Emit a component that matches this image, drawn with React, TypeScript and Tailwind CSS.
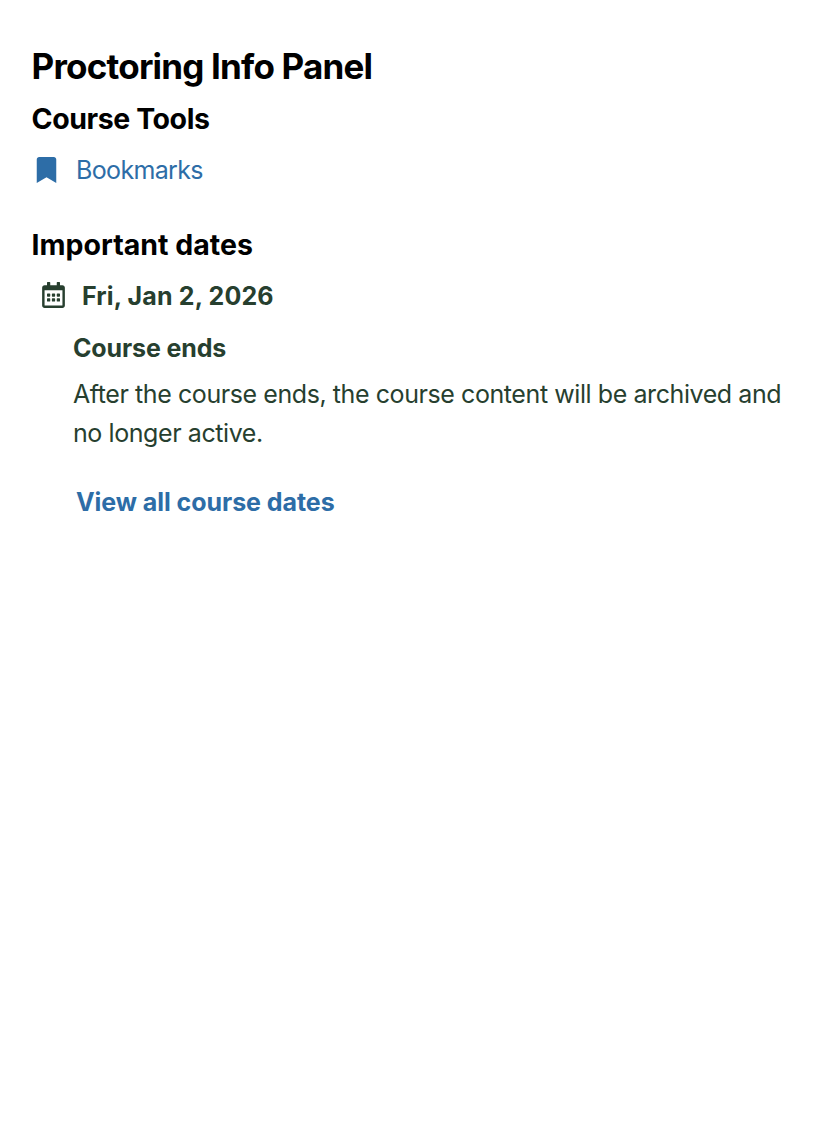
import React from "react";
import { FaBookmark, FaRegCalendarAlt } from "react-icons/fa";

export default function App() {
  return (
    <main className="min-h-screen bg-white px-8 pt-[45px] font-['Inter','Liberation_Sans',sans-serif] text-[#273f2f]">
      <h1 className="-ml-[0.4px] h-[42px] w-max text-[35px] leading-[42px] font-bold tracking-[-0.8px] text-black">Proctoring Info Panel</h1>
      <section>
        <h2 className="mt-[14px] -ml-[0.4px] h-9 w-max text-[28.5px] leading-9 font-bold tracking-[-0.43px] text-black">Course Tools</h2>
        <a className="mt-[13px] flex h-10 w-max items-center text-[25px] tracking-[-0.65px] text-[#2d6da7]">
          <FaBookmark className="mr-[16px] ml-px h-[26px] w-[27px]" />
          <span className="pt-[2px]">Bookmarks</span>
        </a>
      </section>
      <section>
        <h2 className="mt-[37px] -ml-[0.4px] h-9 w-max text-[28.5px] leading-9 font-bold text-black">Important dates</h2>
        <div className="mt-[13px] flex h-10 items-center">
          <FaRegCalendarAlt className="mr-[15px] mb-[2px] ml-[8px] h-[26px] w-[27px]" />
          <span className="pt-[2px] text-[25px] font-bold tracking-[0.15px]">Fri, Jan 2, 2026</span>
        </div>
        <div className="pl-[41px]">
          <h3 className="mt-[12px] h-10 w-max text-[25px] leading-10 font-bold tracking-[-0.13px]">Course ends</h3>
          <p className="mt-[7px] text-[25px] leading-[39px] whitespace-nowrap tracking-[-0.42px]">
            After the course ends, the course content will be archived and<br />no longer active.
          </p>
          <a className="mt-[29px] ml-[3px] block h-10 w-max text-[25px] leading-10 font-bold tracking-[-0.06px] text-[#2d6da7]">View all course dates</a>
        </div>
      </section>
    </main>
  );
}
